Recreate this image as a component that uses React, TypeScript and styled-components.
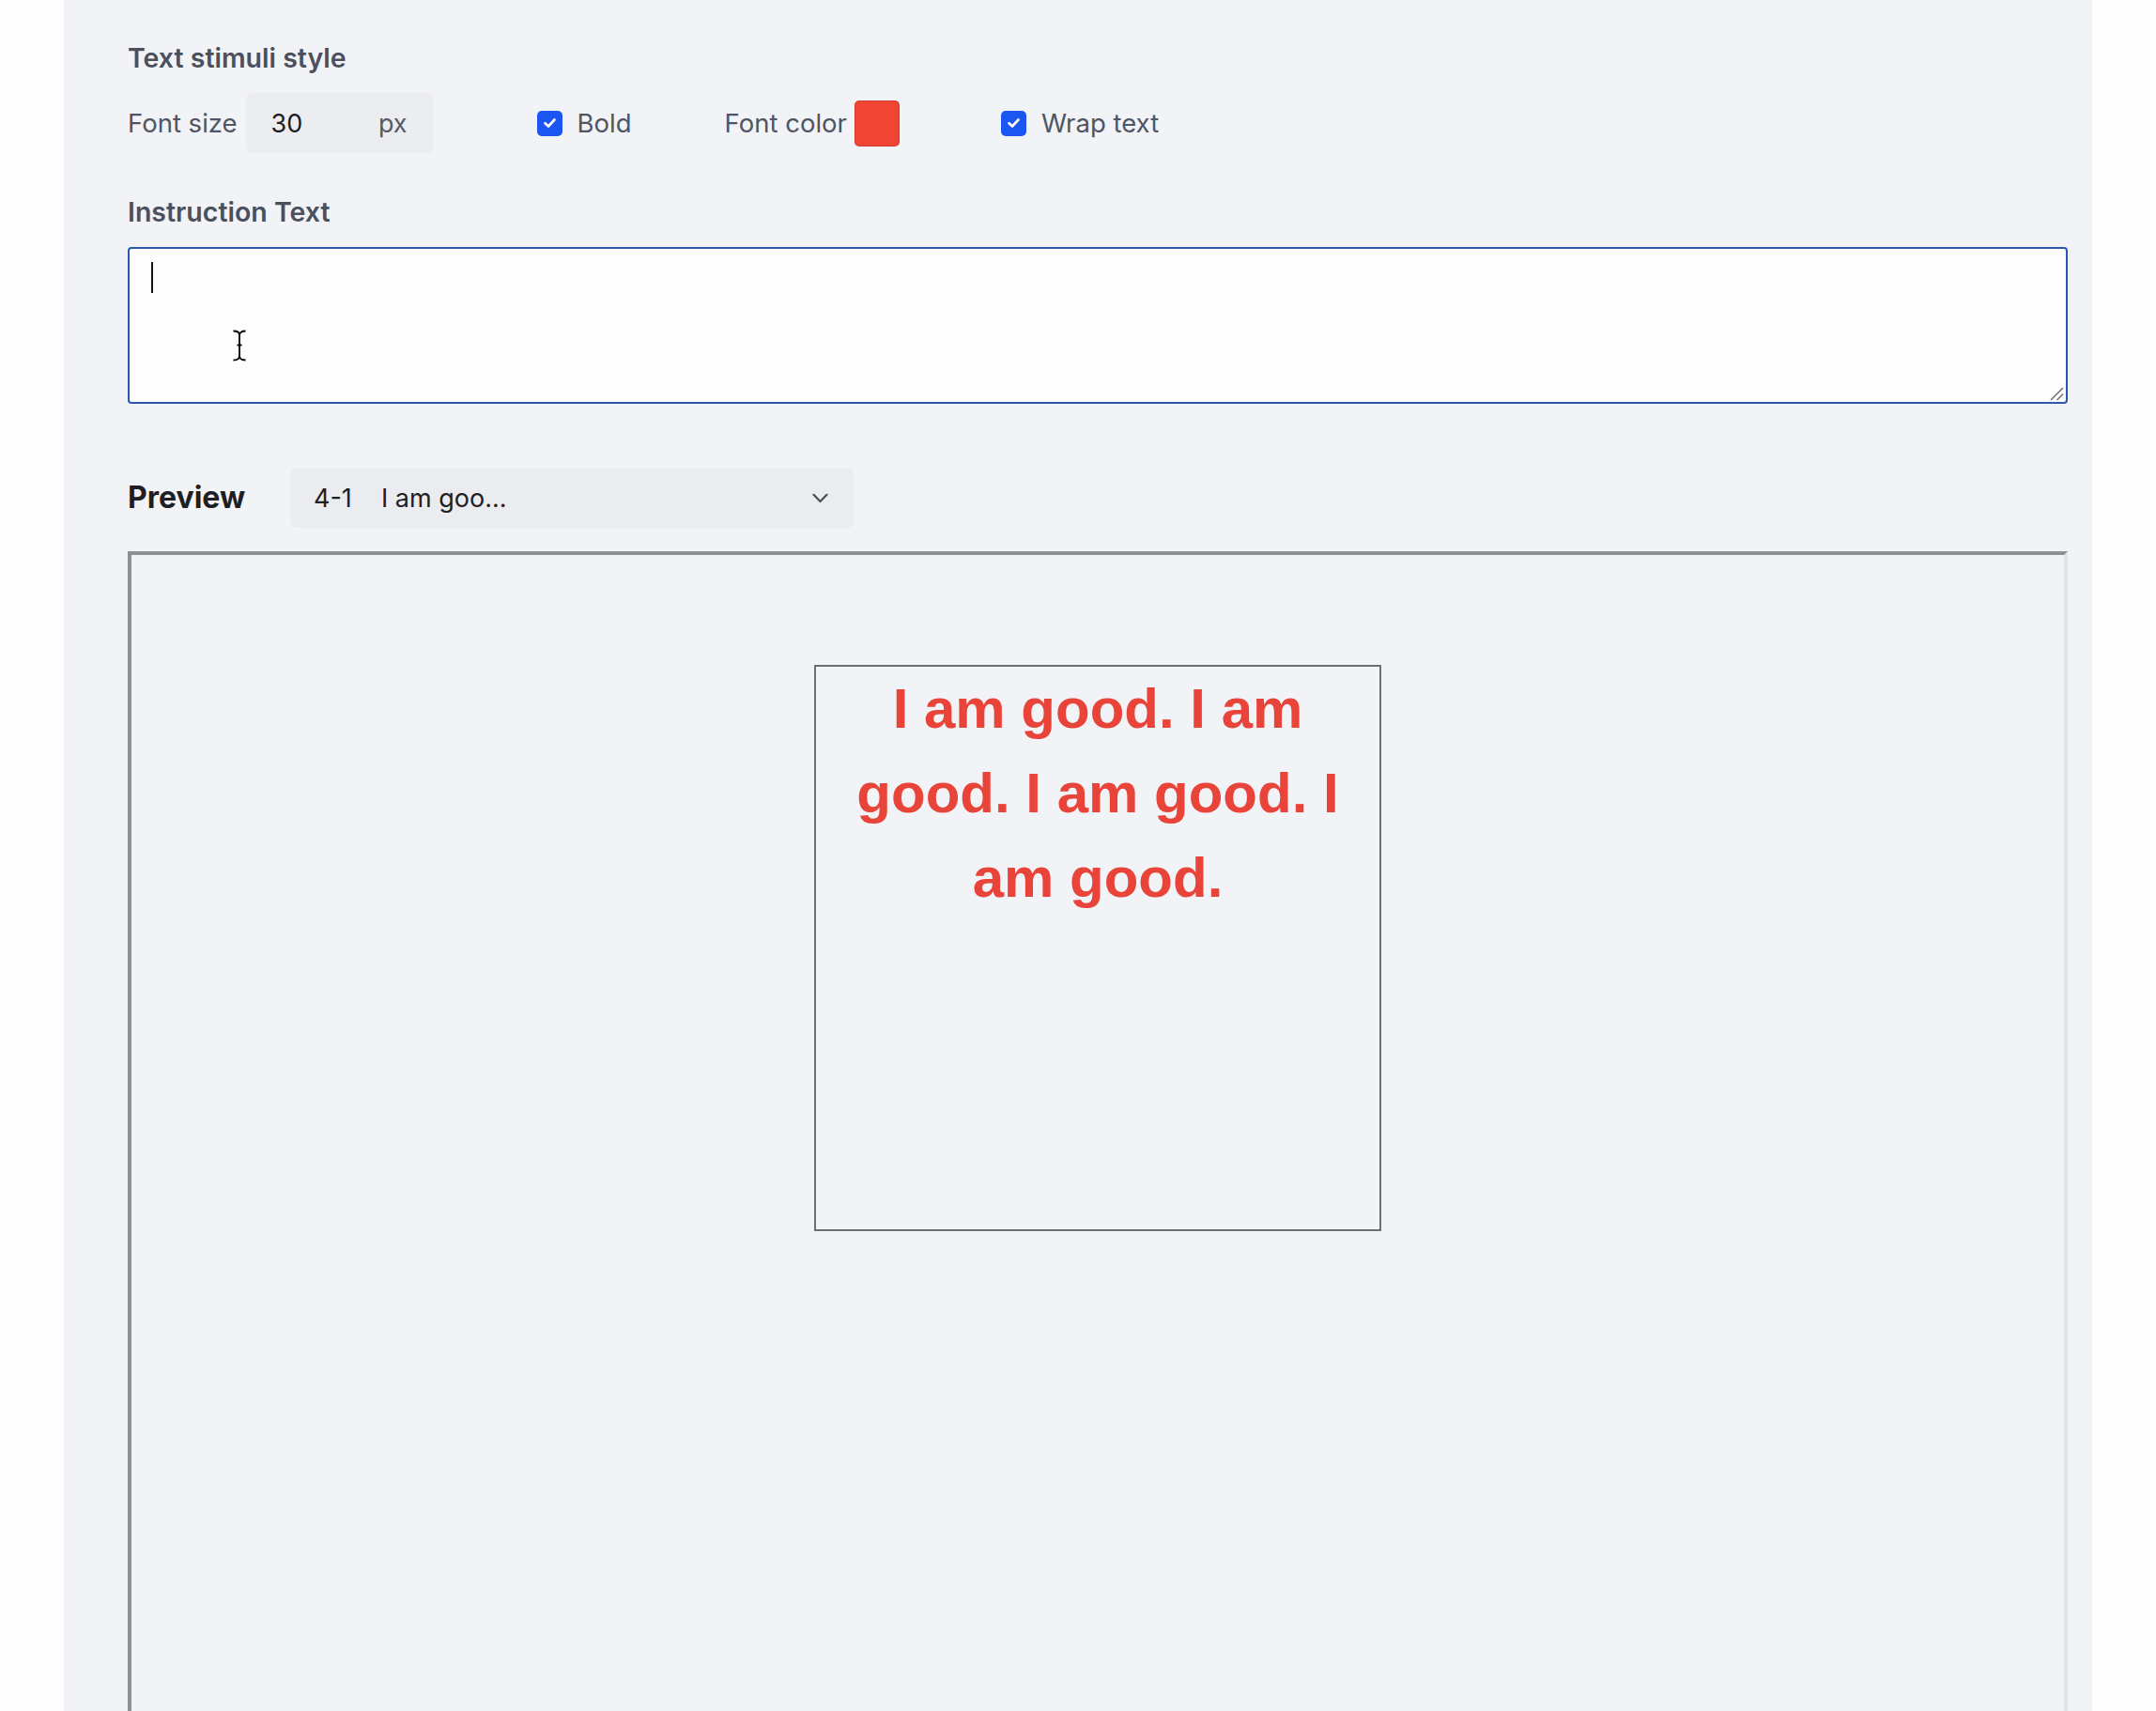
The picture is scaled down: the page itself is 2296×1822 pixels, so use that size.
import * as React from "react";
import styled, { createGlobalStyle } from "styled-components";

const GlobalStyle = createGlobalStyle`
  html, body {
    margin: 0;
    padding: 0;
    background: #fdfdfd;
  }
  body {
    font-family: Inter, "Noto Sans", sans-serif;
    -webkit-font-smoothing: antialiased;
  }
`;

const Panel = styled.div`
  margin-left: 68px;
  width: 2160px;
  box-sizing: border-box;
  padding: 42px 26px 0 68px;
  background: #f2f3f7;
`;

const SectionLabel = styled.div<{ $top?: number }>`
  margin-top: ${p => p.$top || 0}px;
  font-size: 28.5px;
  line-height: 39px;
  font-weight: 600;
  color: #4a505c;
`;

const ControlRow = styled.div`
  display: flex;
  align-items: center;
  height: 64px;
  margin-top: 18px;
`;

const Group = styled.div<{ $left?: number }>`
  display: flex;
  align-items: center;
  margin-left: ${p => p.$left || 0}px;
`;

const FieldLabel = styled.span<{ $gap?: number }>`
  font-size: 27.5px;
  line-height: 39px;
  color: #4f5563;
  margin-left: ${p => p.$gap || 0}px;
`;

const NumberBox = styled.div`
  display: flex;
  align-items: center;
  justify-content: space-between;
  box-sizing: border-box;
  width: 199px;
  height: 64px;
  margin-left: 9px;
  padding: 0 27px;
  border-radius: 6px;
  background: #ecedf1;
  font-size: 27px;
`;

const NumberValue = styled.span`
  color: #1c1c1f;
`;

const Unit = styled.span`
  color: #555b66;
`;

const Check = styled.span`
  display: flex;
  align-items: center;
  justify-content: center;
  width: 27px;
  height: 27px;
  border-radius: 5px;
  background: #1b55f2;
`;

const Swatch = styled.span<{ $color: string }>`
  width: 48px;
  height: 49px;
  margin-left: 8px;
  border-radius: 5px;
  background: ${p => p.$color};
  box-shadow: inset 0 0 0 1px rgba(0, 0, 0, 0.12);
`;

const InputArea = styled.div`
  position: relative;
  box-sizing: border-box;
  height: 167px;
  margin-top: 18px;
  padding: 14px 23px;
  border: 2px solid #2b57ad;
  border-radius: 4px;
  background: #fdfdfe;
`;

const Caret = styled.div`
  width: 2px;
  height: 33px;
  background: #111;
`;

const Grip = styled.svg`
  position: absolute;
  right: 2px;
  bottom: 1px;
`;

const Pointer = styled.svg`
  position: absolute;
  left: 109px;
  top: 86px;
`;

const PreviewRow = styled.div`
  display: flex;
  align-items: center;
  margin-top: 68px;
`;

const PreviewTitle = styled.span`
  width: 174px;
  font-size: 32px;
  line-height: 48px;
  font-weight: 700;
  color: #1d1f24;
`;

const Select = styled.div`
  display: flex;
  align-items: center;
  box-sizing: border-box;
  width: 599px;
  height: 64px;
  padding: 0 27px 0 24px;
  border-radius: 6px;
  background: #ebecf0;
  font-size: 27px;
  color: #1f2024;
`;

const Trial = styled.span`
  width: 72px;
`;

const Option = styled.span`
  flex: 1;
`;

const PreviewFrame = styled.div`
  display: flex;
  justify-content: center;
  align-items: flex-start;
  box-sizing: border-box;
  height: 1300px;
  margin-top: 25px;
  padding-top: 117px;
  border: 4px solid;
  border-color: #8e8f93 #e4e5e9 #e4e5e9 #8e8f93;
`;

const Stimulus = styled.div<{ $color: string }>`
  box-sizing: border-box;
  width: 604px;
  height: 603px;
  border: 2px solid #6e6f74;
  font-family: "Liberation Sans", Arial, sans-serif;
  font-size: 60px;
  line-height: 90px;
  font-weight: 700;
  text-align: center;
  color: ${p => p.$color};
`;

const CheckMark = () => (
  <svg width="15" height="12" viewBox="0 0 15 12">
    <path d="M2.5 6.2 L6 9.5 L12.5 2.5" fill="none" stroke="#fff" strokeWidth="2.6" strokeLinecap="round" strokeLinejoin="round" />
  </svg>
);

const Chevron = () => (
  <svg width="17" height="11" viewBox="0 0 17 11">
    <path d="M1.5 1.8 L8.5 9 L15.5 1.8" fill="none" stroke="#4a4d55" strokeWidth="2.2" strokeLinecap="round" strokeLinejoin="round" />
  </svg>
);

const App = () => {
  return (
    <>
      <GlobalStyle />
      <Panel>
        <SectionLabel>Text stimuli style</SectionLabel>
        <ControlRow>
          <FieldLabel>Font size</FieldLabel>
          <NumberBox>
            <NumberValue>30</NumberValue>
            <Unit>px</Unit>
          </NumberBox>
          <Group $left={111}>
            <Check>
              <CheckMark />
            </Check>
            <FieldLabel $gap={16}>Bold</FieldLabel>
          </Group>
          <Group $left={99}>
            <FieldLabel>Font color</FieldLabel>
            <Swatch $color="#f14534" />
          </Group>
          <Group $left={108}>
            <Check>
              <CheckMark />
            </Check>
            <FieldLabel $gap={16}>Wrap text</FieldLabel>
          </Group>
        </ControlRow>

        <SectionLabel $top={43}>Instruction Text</SectionLabel>
        <InputArea>
          <Caret />
          <Pointer width="16" height="34" viewBox="0 0 16 34">
            <g fill="none" stroke="#000" strokeWidth="1.8">
              <path d="M1.5 1.5 Q8 1.5 8 6 Q8 1.5 14.5 1.5" />
              <path d="M8 6 V28" />
              <path d="M5.5 16.5 H10.5" />
              <path d="M1.5 32.5 Q8 32.5 8 28 Q8 32.5 14.5 32.5" />
            </g>
          </Pointer>
          <Grip width="16" height="16" viewBox="0 0 16 16">
            <g stroke="#6b6b6b" strokeWidth="1.4">
              <path d="M2 15 L15 2" />
              <path d="M8.5 15 L15 8.5" />
            </g>
          </Grip>
        </InputArea>

        <PreviewRow>
          <PreviewTitle>Preview</PreviewTitle>
          <Select>
            <Trial>4-1</Trial>
            <Option>I am goo...</Option>
            <Chevron />
          </Select>
        </PreviewRow>

        <PreviewFrame>
          <Stimulus $color="#e9443a">
            I am good. I am good. I am good. I am good.
          </Stimulus>
        </PreviewFrame>
      </Panel>
    </>
  );
};

export default App;
